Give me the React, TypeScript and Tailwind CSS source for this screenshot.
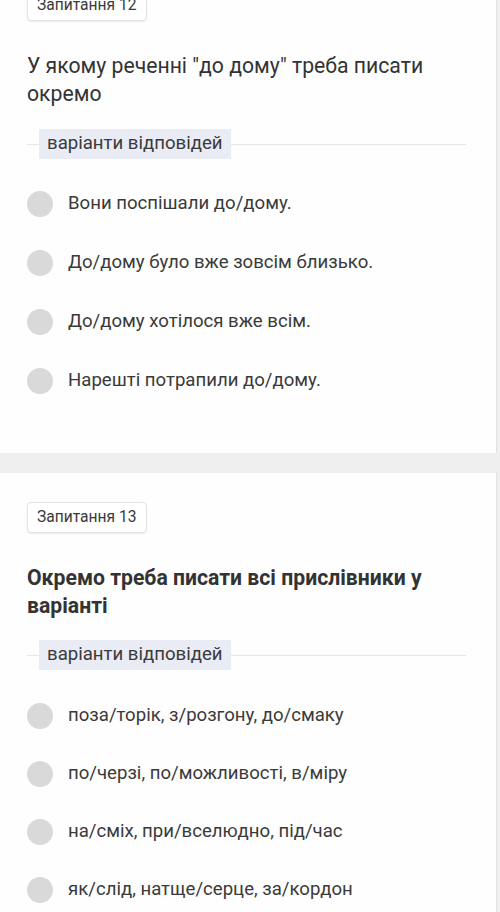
import React from "react";

const font = { fontFamily: "Roboto, 'Noto Sans', sans-serif" };

function Badge({ text }: { text: string }) {
  return (
    <div className="inline-flex h-[31px] items-center rounded-[4px] border border-[#e3e3e3] bg-white px-[9px] text-[15.6px] text-[#3a3a3a] shadow-[0_1px_2px_rgba(0,0,0,0.08)]">
      {text}
    </div>
  );
}

function Label() {
  return (
    <div className="relative flex items-center pr-[30px]">
      <div className="absolute left-0 right-[30px] top-1/2 h-px bg-[#e6e6e6]" />
      <div className="relative ml-[12px] flex h-[30px] items-center bg-[#e9ebf5] px-[8px] text-[18.6px] text-[#3a3a3a]">
        варіанти відповідей
      </div>
    </div>
  );
}

function Option({ text }: { text: string }) {
  return (
    <div className="flex h-[30px] items-center gap-[15px]">
      <div className="h-[26px] w-[26px] shrink-0 rounded-full bg-[#d9d9d9]" />
      <div className="text-[18.6px] text-[#3a3a3a]">{text}</div>
    </div>
  );
}

export default function App() {
  return (
    <div className="flex h-[912px] flex-col overflow-hidden bg-[#efefef]" style={font}>
      <div className="mr-[3px] border-r border-[#e2e2e2] bg-[#fefefe] pb-[57px] pl-[27px]">
        <div className="-mt-[10px]">
          <Badge text="Запитання 12" />
        </div>
        <div className="mt-[31px] pr-[20px] text-[21.2px] leading-[28px] text-[#333]">
          У якому реченні "до дому" треба писати окремо
        </div>
        <div className="mt-[21px]">
          <Label />
        </div>
        <div className="mt-[30px] flex flex-col gap-[29px]">
          <Option text="Вони поспішали до/дому." />
          <Option text="До/дому було вже зовсім близько." />
          <Option text="До/дому хотілося вже всім." />
          <Option text="Нарешті потрапили до/дому." />
        </div>
      </div>
      <div className="h-[20px] shrink-0" />
      <div className="mr-[3px] flex-1 border-r border-[#e2e2e2] bg-[#fefefe] pl-[27px] pt-[29px]">
        <Badge text="Запитання 13" />
        <div className="mt-[31px] pr-[20px] text-[21.2px] font-bold leading-[28px] text-[#333]">
          Окремо треба писати всі прислівники у варіанті
        </div>
        <div className="mt-[20px]">
          <Label />
        </div>
        <div className="mt-[31px] flex flex-col gap-[28px]">
          <Option text="поза/торік, з/розгону, до/смаку" />
          <Option text="по/черзі, по/можливості, в/міру" />
          <Option text="на/сміх, при/вселюдно, під/час" />
          <Option text="як/слід, натще/серце, за/кордон" />
        </div>
      </div>
    </div>
  );
}
